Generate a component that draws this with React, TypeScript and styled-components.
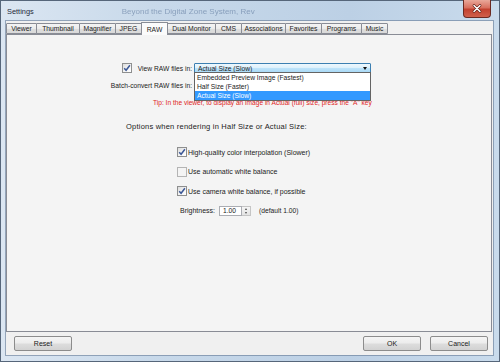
import React from 'react';
import styled, { createGlobalStyle } from 'styled-components';

const GlobalStyle = createGlobalStyle`
  html, body {
    margin: 0;
    padding: 0;
    background: #3d4858;
  }
  body {
    font-family: "Liberation Sans", Arial, sans-serif;
    color: #1b1b1b;
  }
  * {
    box-sizing: border-box;
  }
`;

// Janela com moldura estilo Aero
const Window = styled.div`
  width: 500px;
  height: 362px;
  display: flex;
  flex-direction: column;
  border: 1px solid #56667a;
  padding: 0 6px 6px 5px;
  background: linear-gradient(90deg, #dbe6f2 0%, #c8d9ea 30%, #bcd0e5 70%, #c9dbec 100%);
`;

const TitleBar = styled.div`
  height: 20px;
  display: flex;
  align-items: center;
  padding-left: 1px;
`;

const Title = styled.span`
  font-size: 7.4px;
  color: #1e2a3a;
`;

const GhostText = styled.span`
  margin-left: 88px;
  font-size: 8px;
  color: rgba(45, 75, 120, 0.4);
  filter: blur(0.7px);
  white-space: nowrap;
`;

const CloseButton = styled.div`
  margin-left: auto;
  margin-right: 2px;
  align-self: flex-start;
  margin-top: -1px;
  width: 28px;
  height: 18px;
  border: 1px solid #6b2a22;
  border-top: none;
  border-radius: 0 0 4px 4px;
  background: linear-gradient(180deg, #e9a89a 0%, #d8705f 45%, #c2412f 55%, #d0604c 100%);
  display: flex;
  align-items: center;
  justify-content: center;
`;

const Client = styled.div`
  flex: 1;
  background: #f0f0f0;
  display: flex;
  flex-direction: column;
  box-shadow: 0 0 0 1px rgba(90, 112, 140, 0.55);
`;

const TabStrip = styled.div`
  height: 13px;
  display: flex;
  align-items: flex-end;
  position: relative;
  z-index: 1;
`;

const Tab = styled.div<{ $w: number; $active?: boolean }>`
  width: ${p => p.$w}px;
  height: ${p => (p.$active ? 13 : 11)}px;
  margin-right: -1px;
  margin-bottom: ${p => (p.$active ? -1 : 0)}px;
  border: 1px solid #898c95;
  border-bottom: ${p => (p.$active ? 'none' : '1px solid #898c95')};
  border-radius: 1px 1px 0 0;
  background: ${p =>
    p.$active
      ? '#fbfbfb'
      : 'linear-gradient(180deg, #f4f4f4 0%, #ebebeb 50%, #dedede 51%, #d9d9d9 100%)'};
  position: relative;
  z-index: ${p => (p.$active ? 2 : 1)};
  display: flex;
  align-items: center;
  justify-content: center;
  font-size: 6.8px;
  white-space: nowrap;
`;

const Panel = styled.div`
  height: 298px;
  margin-right: 1px;
  border: 1px solid #898c95;
  background: #f4f4f4;
  display: flex;
  flex-direction: column;
`;

const FormGrid = styled.div`
  display: grid;
  grid-template-columns: 185px 177px;
  column-gap: 2px;
  row-gap: 7px;
  margin-top: 28px;
`;

const FieldLabel = styled.div`
  height: 10px;
  display: flex;
  align-items: center;
  justify-content: flex-end;
  gap: 6px;
  font-size: 6.7px;
  white-space: nowrap;
`;

const Combo = styled.div<{ $focused?: boolean }>`
  position: relative;
  height: 10px;
  border: 1px solid ${p => (p.$focused ? '#3c7fb1' : '#acacac')};
  border-radius: 1px;
  background: ${p =>
    p.$focused
      ? 'linear-gradient(180deg, #eef8fe 0%, #dcf0fc 50%, #bfe4fa 51%, #a9d9f6 100%)'
      : 'linear-gradient(180deg, #f2f2f2 0%, #e6e6e6 100%)'};
  display: flex;
  align-items: center;
  padding-left: 3px;
  font-size: 6.7px;
  white-space: nowrap;
`;

const ComboArrow = styled.span`
  margin-left: auto;
  margin-right: 3px;
  width: 0;
  height: 0;
  border-left: 2.5px solid transparent;
  border-right: 2.5px solid transparent;
  border-top: 3px solid #111;
`;

const DropList = styled.div`
  position: absolute;
  left: -1px;
  right: -1px;
  top: 8px;
  z-index: 5;
  border: 1px solid #646464;
  background: #fff;
`;

const DropItem = styled.div<{ $selected?: boolean }>`
  height: 9px;
  display: flex;
  align-items: center;
  padding-left: 2px;
  font-size: 6.7px;
  background: ${p => (p.$selected ? '#3399ff' : 'transparent')};
  color: ${p => (p.$selected ? '#fff' : '#1b1b1b')};
`;

const Tip = styled.div`
  margin: 9px 0 0 146px;
  height: 8px;
  line-height: 8px;
  font-size: 6.6px;
  color: #e02424;
  white-space: nowrap;
`;

const SectionText = styled.div`
  margin: 15px 0 0 119px;
  height: 10px;
  line-height: 10px;
  font-size: 7.5px;
  letter-spacing: 0.22px;
  white-space: nowrap;
`;

const CheckList = styled.div`
  margin: 15px 0 0 170px;
  display: flex;
  flex-direction: column;
  gap: 9.5px;
`;

const CheckRow = styled.div`
  height: 10px;
  display: flex;
  align-items: center;
  gap: 1px;
  font-size: 7px;
  white-space: nowrap;
`;

const Box = styled.span<{ $dim?: boolean }>`
  width: 10px;
  height: 10px;
  flex: none;
  border: 1px solid ${p => (p.$dim ? '#b4b4b4' : '#8e8f8f')};
  background: ${p =>
    p.$dim ? '#f4f4f4' : 'linear-gradient(135deg, #dcdcdc 0%, #f6f6f6 60%, #fff 100%)'};
  display: flex;
  align-items: center;
  justify-content: center;
`;

const BrightnessRow = styled.div`
  height: 10px;
  display: flex;
  align-items: center;
  padding-left: 3px;
  font-size: 7px;
  white-space: nowrap;
`;

const NumberBox = styled.div`
  margin-left: 4px;
  width: 23px;
  height: 10px;
  border: 1px solid #abadb3;
  background: #fff;
  display: flex;
  align-items: center;
  padding-left: 3px;
  font-size: 6.7px;
`;

const Spinner = styled.div`
  width: 9px;
  height: 10px;
  display: flex;
  flex-direction: column;
  border: 1px solid #c5c5c5;
  border-left: none;
  background: linear-gradient(180deg, #f6f6f6, #e3e3e3);
`;

const SpinHalf = styled.div<{ $up?: boolean }>`
  flex: 1;
  display: flex;
  align-items: center;
  justify-content: center;
  &::after {
    content: '';
    border-left: 1.5px solid transparent;
    border-right: 1.5px solid transparent;
    ${p => (p.$up ? 'border-bottom: 2px solid #4a4a4a;' : 'border-top: 2px solid #4a4a4a;')}
  }
`;

const DefaultNote = styled.span`
  margin-left: 8px;
  font-size: 6.7px;
`;

const Footer = styled.div`
  flex: 1;
  display: flex;
  align-items: flex-start;
  gap: 9px;
  padding: 4px 5px 0 8px;
`;

const Button = styled.button<{ $pushRight?: boolean }>`
  width: 58px;
  height: 15px;
  padding: 0;
  margin-left: ${p => (p.$pushRight ? 'auto' : '0')};
  border: 1px solid #8c8c8c;
  border-radius: 2px;
  background: linear-gradient(180deg, #f5f5f5 0%, #ececec 48%, #dddddd 52%, #d2d2d2 100%);
  font-family: "Liberation Sans", Arial, sans-serif;
  font-size: 7px;
  color: #1b1b1b;
`;

const CheckMark = () => (
  <svg width="8" height="8" viewBox="0 0 8 8">
    <path d="M1.2 4.2 L3.1 6.3 L6.9 1.3" fill="none" stroke="#3b5796" strokeWidth="1.5" />
  </svg>
);

const tabs = [
  { label: 'Viewer', w: 31 },
  { label: 'Thumbnail', w: 44 },
  { label: 'Magnifier', w: 37 },
  { label: 'JPEG', w: 27 },
  { label: 'RAW', w: 27, active: true },
  { label: 'Dual Monitor', w: 49 },
  { label: 'CMS', w: 27 },
  { label: 'Associations', w: 45 },
  { label: 'Favorites', w: 37 },
  { label: 'Programs', w: 41 },
  { label: 'Music', w: 27 },
];

const rawOptions = [
  'Embedded Preview Image (Fastest)',
  'Half Size (Faster)',
  'Actual Size (Slow)',
];

const checks = [
  { label: 'High-quality color interpolation (Slower)', checked: true },
  { label: 'Use automatic white balance', checked: false },
  { label: 'Use camera white balance, if possible', checked: true },
];

const App: React.FC = () => {
  return (
    <>
      <GlobalStyle />
      <Window>
        <TitleBar>
          <Title>Settings</Title>
          <GhostText>Beyond the Digital Zone System, Rev</GhostText>
          <CloseButton>
            <svg width="10" height="9" viewBox="0 0 10 9">
              <path d="M2 1.5 L8 7.5 M8 1.5 L2 7.5" stroke="#5a1a12" strokeWidth="2.6" strokeLinecap="round" />
              <path d="M2 1.5 L8 7.5 M8 1.5 L2 7.5" stroke="#fff" strokeWidth="1.5" strokeLinecap="round" />
            </svg>
          </CloseButton>
        </TitleBar>

        <Client>
          <TabStrip>
            {tabs.map(t => (
              <Tab key={t.label} $w={t.w} $active={t.active}>
                {t.label}
              </Tab>
            ))}
          </TabStrip>

          <Panel>
            <FormGrid>
              <FieldLabel>
                <Box>
                  <CheckMark />
                </Box>
                View RAW files in:
              </FieldLabel>
              <Combo $focused>
                Actual Size (Slow)
                <ComboArrow />
                <DropList>
                  {rawOptions.map((o, i) => (
                    <DropItem key={o} $selected={i === 2}>
                      {o}
                    </DropItem>
                  ))}
                </DropList>
              </Combo>

              <FieldLabel>Batch-convert RAW files in:</FieldLabel>
              <Combo>
                Half Size (Faster)
                <ComboArrow />
              </Combo>
            </FormGrid>

            <Tip>Tip: In the viewer, to display an image in Actual (full) size, press the "A" key</Tip>

            <SectionText>Options when rendering in Half Size or Actual Size:</SectionText>

            <CheckList>
              {checks.map(c => (
                <CheckRow key={c.label}>
                  <Box $dim={!c.checked}>{c.checked && <CheckMark />}</Box>
                  {c.label}
                </CheckRow>
              ))}
              <BrightnessRow>
                Brightness:
                <NumberBox>1.00</NumberBox>
                <Spinner>
                  <SpinHalf $up />
                  <SpinHalf />
                </Spinner>
                <DefaultNote>(default 1.00)</DefaultNote>
              </BrightnessRow>
            </CheckList>
          </Panel>

          <Footer>
            <Button>Reset</Button>
            <Button $pushRight>OK</Button>
            <Button>Cancel</Button>
          </Footer>
        </Client>
      </Window>
    </>
  );
};

export default App;
